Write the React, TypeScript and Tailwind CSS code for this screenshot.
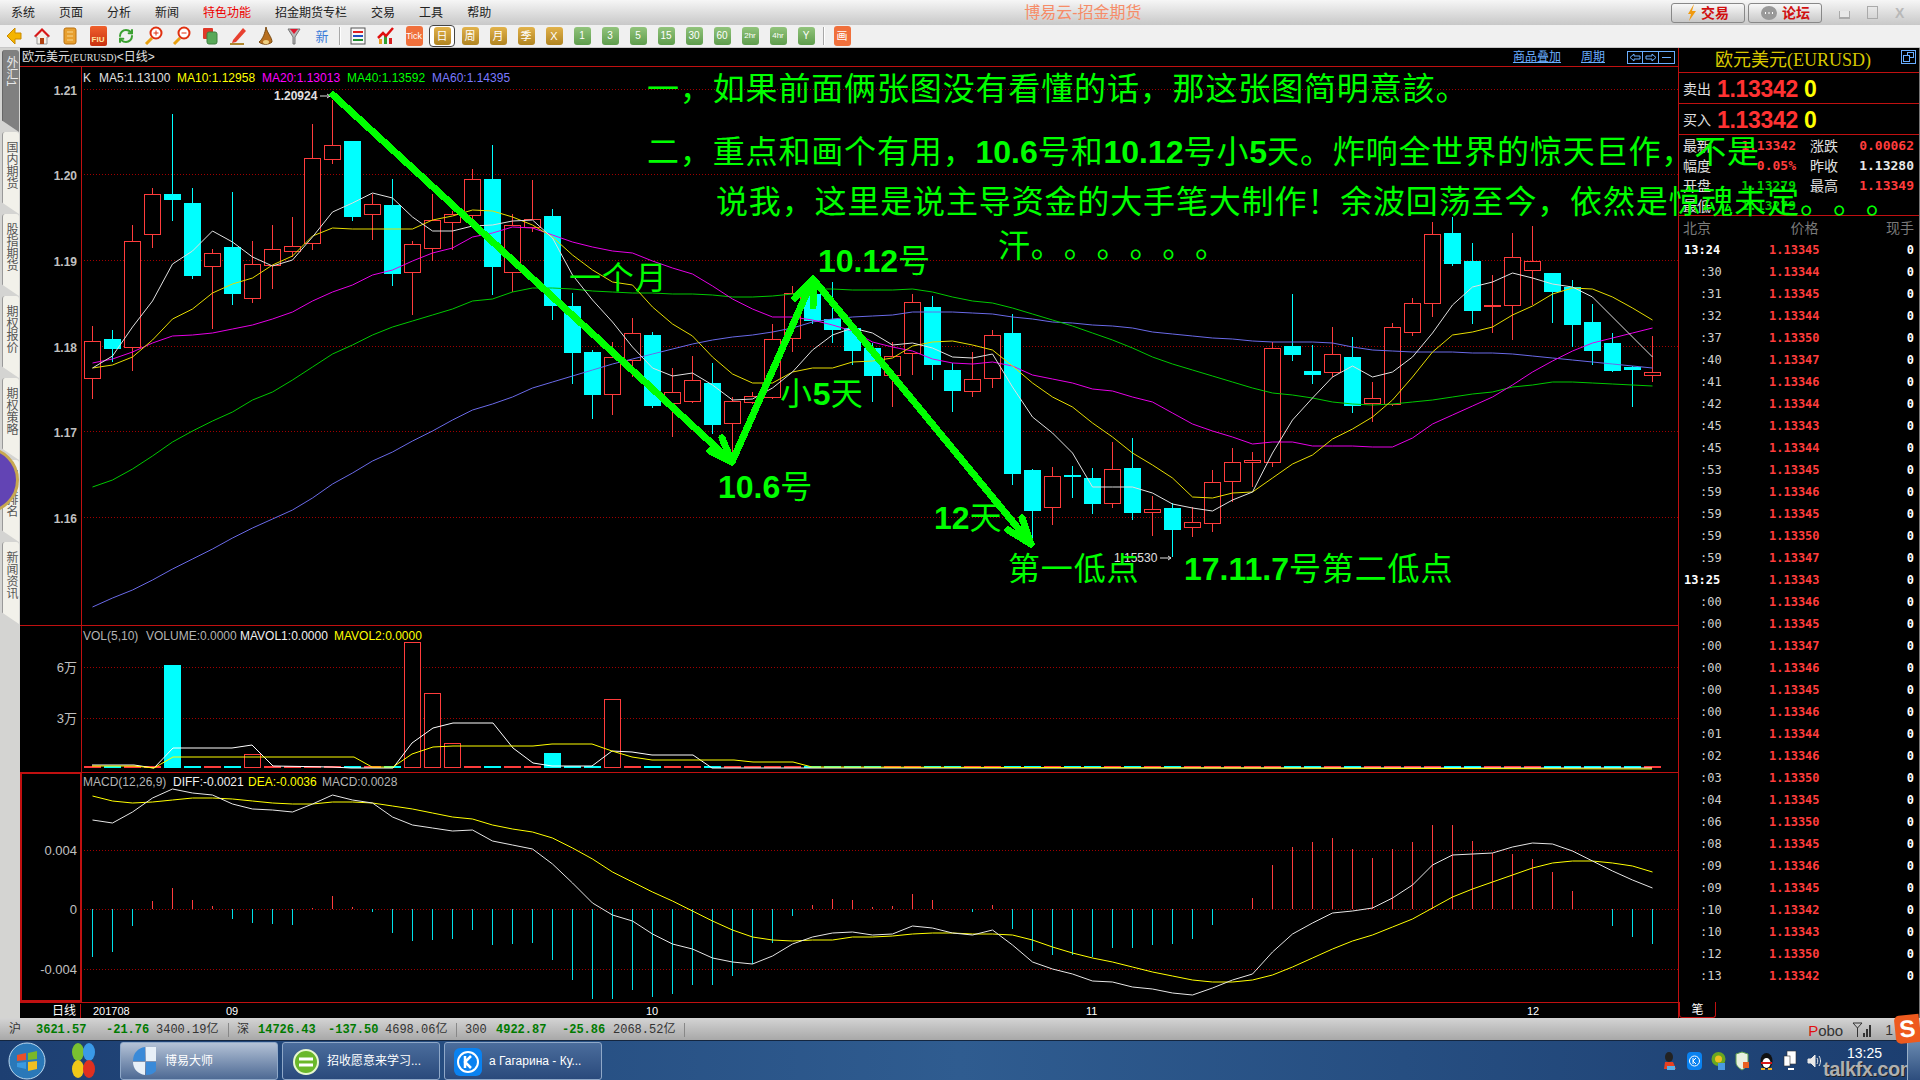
import { RefreshCw } from "lucide-react";

type Candle = [number, number, number, number, number];

// 0 = up (red outline), 1 = down (solid cyan): high, body top, body bottom, low
const candles: Candle[] = [
  [0, 326, 341, 378, 399], [1, 330, 339, 348, 362], [0, 225, 241, 347, 371], [0, 188, 194, 234, 248],
  [1, 114, 194, 199, 221], [1, 188, 203, 275, 279], [0, 249, 253, 266, 329], [1, 192, 247, 293, 305],
  [0, 241, 264, 298, 303], [0, 225, 249, 265, 289], [0, 217, 246, 251, 257], [0, 124, 158, 243, 250],
  [0, 100, 145, 159, 164], [1, 141, 141, 216, 221], [0, 194, 204, 214, 240], [1, 179, 205, 273, 286],
  [0, 241, 244, 272, 315], [0, 194, 220, 248, 261], [0, 211, 214, 222, 250], [0, 169, 179, 215, 220],
  [1, 145, 179, 266, 295], [0, 214, 225, 272, 292], [0, 180, 219, 227, 232], [1, 209, 216, 305, 320],
  [1, 293, 306, 352, 384], [1, 350, 352, 394, 419], [0, 342, 357, 394, 415], [0, 318, 333, 360, 377],
  [1, 332, 335, 405, 408], [0, 368, 392, 403, 437], [0, 356, 380, 401, 403], [1, 363, 383, 424, 434],
  [0, 397, 401, 423, 453], [0, 392, 396, 402, 404], [0, 324, 339, 397, 399], [0, 286, 293, 338, 352],
  [1, 277, 294, 320, 324], [1, 282, 319, 329, 343], [1, 326, 328, 350, 365], [1, 343, 348, 375, 402],
  [0, 342, 356, 375, 407], [0, 294, 302, 353, 375], [1, 296, 307, 364, 380], [1, 363, 370, 390, 412],
  [0, 352, 379, 391, 397], [0, 330, 335, 378, 388], [1, 314, 333, 473, 485], [1, 469, 470, 510, 543],
  [0, 467, 476, 507, 525], [1, 466, 475, 476, 498], [1, 468, 478, 503, 514], [0, 442, 469, 503, 508],
  [1, 438, 468, 512, 520], [0, 496, 509, 512, 536], [1, 503, 508, 529, 557], [0, 507, 522, 527, 537],
  [0, 470, 482, 523, 532], [0, 448, 462, 481, 502], [0, 452, 460, 462, 487], [0, 342, 348, 462, 467],
  [1, 294, 346, 354, 361], [1, 345, 371, 374, 384], [0, 327, 354, 372, 377], [1, 337, 357, 405, 413],
  [0, 382, 398, 403, 422], [0, 323, 327, 404, 406], [0, 298, 303, 332, 336], [0, 222, 234, 303, 317],
  [1, 217, 233, 263, 266], [1, 243, 261, 310, 324], [0, 275, 305, 306, 333], [0, 233, 257, 305, 340],
  [0, 226, 261, 270, 305], [1, 273, 273, 291, 323], [1, 280, 287, 324, 347], [1, 304, 322, 350, 365],
  [1, 333, 343, 370, 372], [1, 366, 367, 369, 407], [0, 336, 372, 375, 382],
];

const ma5 = [368, 356, 327, 301, 264, 251, 231, 242, 257, 266, 260, 237, 212, 203, 193, 198, 217, 231, 231, 226, 225, 221, 220, 238, 275, 300, 322, 347, 368, 376, 373, 385, 400, 399, 388, 372, 350, 335, 328, 333, 345, 343, 348, 357, 358, 354, 387, 417, 433, 453, 487, 487, 487, 493, 504, 508, 511, 500, 492, 453, 420, 398, 377, 366, 377, 372, 357, 333, 305, 287, 282, 273, 278, 284, 287, 297, 317, 337, 357];
const ma10 = [368, 365, 357, 340, 319, 309, 293, 284, 278, 265, 256, 236, 228, 229, 229, 229, 229, 220, 216, 210, 211, 217, 225, 237, 255, 270, 282, 285, 307, 324, 336, 357, 374, 383, 383, 372, 368, 368, 362, 361, 358, 346, 342, 341, 345, 350, 366, 383, 397, 407, 423, 437, 453, 465, 478, 497, 498, 493, 492, 478, 464, 455, 439, 429, 417, 400, 377, 352, 335, 332, 327, 315, 306, 294, 288, 289, 297, 308, 320];
const ma20 = [363, 359, 352, 343, 336, 335, 333, 329, 325, 319, 312, 301, 292, 285, 275, 270, 261, 253, 248, 237, 233, 227, 228, 235, 242, 247, 251, 253, 261, 268, 274, 286, 299, 309, 317, 317, 320, 325, 331, 342, 347, 351, 359, 363, 364, 362, 366, 375, 379, 383, 389, 391, 397, 402, 413, 424, 431, 437, 444, 442, 442, 446, 446, 446, 447, 447, 438, 424, 415, 406, 397, 385, 372, 361, 351, 343, 338, 333, 328];
const ma40 = [487, 480, 469, 456, 442, 431, 421, 412, 400, 392, 380, 367, 354, 345, 335, 327, 321, 315, 309, 301, 299, 292, 288, 288, 289, 291, 292, 293, 293, 294, 294, 295, 297, 297, 296, 294, 289, 289, 290, 290, 290, 289, 292, 297, 301, 303, 308, 314, 320, 326, 333, 340, 348, 357, 364, 370, 376, 382, 388, 393, 395, 398, 402, 404, 405, 404, 402, 400, 397, 394, 392, 387, 385, 382, 382, 383, 384, 385, 386];
const ma60 = [607, 598, 590, 580, 569, 559, 549, 538, 528, 519, 510, 498, 484, 473, 461, 452, 441, 431, 420, 410, 404, 397, 388, 382, 376, 370, 364, 359, 354, 349, 344, 340, 337, 335, 332, 328, 322, 319, 317, 316, 315, 312, 312, 312, 313, 314, 317, 319, 322, 323, 325, 326, 328, 332, 334, 336, 338, 339, 341, 342, 342, 342, 343, 347, 350, 351, 352, 352, 352, 353, 353, 354, 356, 358, 360, 362, 364, 366, 368];

const macdBars = [957, 952, 926, 901, 888, 900, 906, 919, 923, 924, 925, 908, 896, 907, 912, 933, 941, 940, 939, 930, 945, 944, 943, 960, 980, 999, 999, 990, 997, 994, 985, 985, 976, 964, 943, 916, 905, 899, 900, 907, 906, 894, 900, 909, 912, 905, 929, 951, 955, 955, 957, 948, 948, 945, 944, 939, 925, 909, 898, 865, 847, 842, 838, 849, 858, 849, 842, 825, 825, 841, 853, 854, 859, 872, 891, 909, 926, 937, 944];
const diff = [820, 823, 812, 798, 789, 793, 795, 804, 809, 810, 812, 804, 795, 800, 803, 817, 825, 828, 831, 830, 841, 845, 849, 864, 883, 903, 915, 921, 934, 944, 949, 958, 962, 964, 956, 944, 937, 933, 932, 935, 934, 926, 928, 933, 935, 930, 945, 962, 969, 974, 981, 982, 987, 989, 993, 995, 988, 980, 974, 952, 934, 923, 913, 911, 908, 898, 885, 865, 855, 854, 853, 847, 843, 844, 851, 861, 871, 880, 888];
const dea = [796, 801, 803, 802, 800, 798, 798, 799, 801, 803, 804, 804, 802, 802, 803, 806, 809, 813, 817, 819, 825, 829, 832, 838, 848, 859, 872, 882, 892, 901, 911, 921, 930, 937, 940, 941, 940, 940, 937, 937, 936, 934, 933, 933, 934, 934, 935, 940, 947, 953, 958, 962, 967, 972, 976, 980, 982, 982, 980, 975, 967, 958, 949, 941, 935, 927, 919, 908, 897, 889, 882, 875, 868, 863, 861, 861, 863, 866, 872];

const volBars: Record<number, number> = { 4: 665, 8: 754, 16: 642, 17: 693, 18: 743, 23: 753, 26: 699 };
const volWhite = "92,765 134,765 154,768 173,748 232,748 252,745 273,766 332,767 351,768 393,768 412,743 433,728 453,723 493,723 513,748 533,763 552,766 592,766 612,751 632,752 652,755 693,755 712,768 1652,768";
const volYellow = "92,766 134,766 154,768 173,757 354,757 372,767 393,767 412,754 433,747 453,746 533,746 552,744 592,744 612,751 632,757 652,760 734,760 753,762 793,762 812,767 1652,769";

const ticks: [string, string][] = [
  ["13:24", "1.13345"], [":30", "1.13344"], [":31", "1.13345"], [":32", "1.13344"], [":37", "1.13350"],
  [":40", "1.13347"], [":41", "1.13346"], [":42", "1.13344"], [":45", "1.13343"], [":45", "1.13344"],
  [":53", "1.13345"], [":59", "1.13346"], [":59", "1.13345"], [":59", "1.13350"], [":59", "1.13347"],
  ["13:25", "1.13343"], [":00", "1.13346"], [":00", "1.13345"], [":00", "1.13347"], [":00", "1.13346"],
  [":00", "1.13345"], [":00", "1.13346"], [":01", "1.13344"], [":02", "1.13346"], [":03", "1.13350"],
  [":04", "1.13345"], [":06", "1.13350"], [":08", "1.13345"], [":09", "1.13346"], [":09", "1.13345"],
  [":10", "1.13342"], [":10", "1.13343"], [":12", "1.13350"], [":13", "1.13342"],
];

const line = (ys: number[]) => ys.map((y, i) => `${92.5 + 20 * i},${y}`).join(" ");

function Grid({ ys }: { ys: number[] }) {
  return (
    <g stroke="#a00000" strokeDasharray="1 2" shapeRendering="crispEdges">
      {ys.map((y) => (
        <line key={y} x1={81} x2={1678} y1={y} y2={y} />
      ))}
    </g>
  );
}

function AxisLabel({ y, children, bold }: { y: number; children: string; bold?: boolean }) {
  return (
    <text x={77} y={y + 5} textAnchor="end" fill="#c0c0c0" className={bold ? "text-[12px] font-bold" : "text-[13px]"}>
      {children}
    </text>
  );
}

function PriceChart() {
  const prices: [number, string][] = [[89.5, "1.21"], [174.5, "1.20"], [260.5, "1.19"], [346.5, "1.18"], [431.5, "1.17"], [517.5, "1.16"]];
  return (
    <svg width={1658} height={558} viewBox="20 67 1658 558" className="block">
      <Grid ys={prices.map((p) => p[0])} />
      <line x1={81.5} x2={81.5} y1={67} y2={625} stroke="#c01010" />
      {prices.map(([y, t]) => (
        <AxisLabel key={t} y={y} bold>{t}</AxisLabel>
      ))}
      <g shapeRendering="crispEdges">
        {candles.map(([kind, hi, top, bot, lo], i) => {
          const x = 92 + 20 * i;
          const color = kind ? "#00ffff" : "#ff3c3c";
          return (
            <g key={i} stroke={color}>
              <line x1={x + 0.5} x2={x + 0.5} y1={hi} y2={top} />
              <line x1={x + 0.5} x2={x + 0.5} y1={bot} y2={lo} />
              <rect x={x - 8 + 0.5} y={top + 0.5} width={16} height={bot - top} fill={kind ? color : "#000"} />
            </g>
          );
        })}
      </g>
      <g fill="none">
        <polyline points={line(ma60)} stroke="#6a6ae8" />
        <polyline points={line(ma40)} stroke="#00c800" />
        <polyline points={line(ma20)} stroke="#e600e6" />
        <polyline points={line(ma10)} stroke="#e6dc00" />
        <polyline points={line(ma5)} stroke="#e0e0e0" />
      </g>
      <text x={83} y={82} fill="#e0e0e0" className="text-[12px]">
        K
        <tspan x={99}>MA5:1.13100</tspan>
        <tspan x={177} fill="#ffff00">MA10:1.12958</tspan>
        <tspan x={262} fill="#ff00ff">MA20:1.13013</tspan>
        <tspan x={347} fill="#00ff00">MA40:1.13592</tspan>
        <tspan x={432} fill="#7a7aff">MA60:1.14395</tspan>
      </text>
      <text x={274} y={100} fill="#e0e0e0" className="text-[12px] font-bold">1.20924</text>
      <path d="M320 96h10m-3-2l3 2-3 2" stroke="#e0e0e0" fill="none" />
      <text x={1114} y={562} fill="#e0e0e0" className="text-[12px]">1.15530</text>
      <path d="M1160 558h11m-3-2l3 2-3 2" stroke="#e0e0e0" fill="none" />
      {/* hand drawn arrows from the author */}
      <g fill="none" stroke="#00ff00" strokeWidth={7} strokeLinecap="round" strokeLinejoin="round" shapeRendering="crispEdges">
        <path d="M333 95L732 462" />
        <path d="M710 451L732 462L722 438" />
        <path d="M732 462L813 279" />
        <path d="M795 298L813 279L813 306" />
        <path d="M813 279L1031 544" />
        <path d="M1008 530L1031 544L1022 518" />
      </g>
    </svg>
  );
}

function VolumeChart() {
  return (
    <svg width={1658} height={147} viewBox="20 625 1658 147" className="block">
      <Grid ys={[667.5, 718.5]} />
      <line x1={20} x2={1678} y1={625.5} y2={625.5} stroke="#c01010" />
      <line x1={81.5} x2={81.5} y1={625} y2={772} stroke="#c01010" />
      <AxisLabel y={667}>6万</AxisLabel>
      <AxisLabel y={718}>3万</AxisLabel>
      <g shapeRendering="crispEdges">
        {candles.map(([kind], i) => {
          const x = 92 + 20 * i;
          const color = kind ? "#00ffff" : "#ff3c3c";
          const top = volBars[i] ?? 766;
          return (
            <rect key={i} x={x - 8 + 0.5} y={top + 0.5} width={16} height={767 - top} stroke={color} fill={kind ? color : "#000"} />
          );
        })}
      </g>
      <polyline points={volWhite} stroke="#ffffff" fill="none" />
      <polyline points={volYellow} stroke="#ffff00" fill="none" />
      <text x={83} y={640} className="text-[12px]" fill="#b4b4b4">
        VOL(5,10)
        <tspan x={146} fill="#b4b4b4">VOLUME:0.0000</tspan>
        <tspan x={240} fill="#f0f0f0">MAVOL1:0.0000</tspan>
        <tspan x={334} fill="#ffff00">MAVOL2:0.0000</tspan>
      </text>
    </svg>
  );
}

function MacdChart() {
  return (
    <svg width={1658} height={230} viewBox="20 772 1658 230" className="block">
      <Grid ys={[850.5, 909.5, 969.5]} />
      <line x1={20} x2={1678} y1={772.5} y2={772.5} stroke="#c01010" />
      <rect x={21} y={773} width={60} height={228} stroke="#c01010" strokeWidth={2} fill="none" />
      <AxisLabel y={850}>0.004</AxisLabel>
      <AxisLabel y={909}>0</AxisLabel>
      <AxisLabel y={969}>-0.004</AxisLabel>
      <g shapeRendering="crispEdges">
        {macdBars.map((y, i) => (
          <line key={i} x1={92.5 + 20 * i} x2={92.5 + 20 * i} y1={909} y2={y} stroke={y > 909 ? "#00e0e8" : "#ff3c3c"} />
        ))}
      </g>
      <polyline points={line(dea)} stroke="#ffff00" fill="none" />
      <polyline points={line(diff)} stroke="#e6e6e6" fill="none" />
      <text x={83} y={786} className="text-[12px]" fill="#b4b4b4">
        MACD(12,26,9)
        <tspan x={173} fill="#f0f0f0">DIFF:-0.0021</tspan>
        <tspan x={248} fill="#ffff00">DEA:-0.0036</tspan>
        <tspan x={322} fill="#b4b4b4">MACD:0.0028</tspan>
      </text>
    </svg>
  );
}

const goldBtns = ["周", "月", "季", "X"];
const greenBtns = ["1", "3", "5", "15", "30", "60", "2hr", "4hr", "Y"];

function Tool({ children }: { children: React.ReactNode }) {
  return <div className="flex h-[22px] w-[28px] shrink-0 items-center justify-center">{children}</div>;
}

function GoldBtn({ label }: { label: string }) {
  return (
    <span className="flex h-[18px] w-[17px] items-center justify-center rounded-[3px] bg-linear-to-b from-[#e2b24a] to-[#b08420] text-[11px] leading-none text-white">
      {label}
    </span>
  );
}

function Toolbar() {
  return (
    <div className="flex h-[23px] items-start border-b border-[#c8c8c8] bg-[#f0f0f0]">
      <Tool>
        <svg width="18" height="20" viewBox="0 0 18 20"><path d="M10 2L2 10l8 8v-5h6V7h-6z" fill="#f4b400" stroke="#c98a00" /></svg>
      </Tool>
      <Tool>
        <svg width="20" height="20" viewBox="0 0 20 20"><path d="M3 10l7-7 7 7v1h-2v7H5v-7H3z" fill="#f4f0e8" stroke="#999" /><path d="M2 10l8-8 8 8-2 1-6-6-6 6z" fill="#d81818" /><rect x="8" y="12" width="4" height="6" fill="#b04010" /></svg>
      </Tool>
      <Tool>
        <svg width="18" height="20" viewBox="0 0 18 20"><rect x="3" y="2" width="12" height="16" rx="2" fill="#e8a030" stroke="#b87010" /><path d="M6 6h6M6 10h6M6 14h6" stroke="#f8d890" /></svg>
      </Tool>
      <Tool>
        <div className="flex h-[20px] w-[17px] items-end justify-center rounded-[2px] bg-linear-to-b from-[#f0602c] to-[#c83010] pb-[2px] font-bold text-[8px] leading-none text-[#ffe8a0]">FIU</div>
      </Tool>
      <Tool><RefreshCw size={16} color="#3aa030" strokeWidth={3} /></Tool>
      <Tool>
        <svg width="20" height="20" viewBox="0 0 20 20"><path d="M8 12l-6 6" stroke="#e8a010" strokeWidth="3" /><circle cx="12" cy="7" r="5.5" fill="#fff" stroke="#e03010" strokeWidth="2" /><path d="M9.5 7h5M12 4.5v5" stroke="#e03010" /></svg>
      </Tool>
      <Tool>
        <svg width="20" height="20" viewBox="0 0 20 20"><path d="M8 12l-6 6" stroke="#e8a010" strokeWidth="3" /><circle cx="12" cy="7" r="5.5" fill="#fff" stroke="#e03010" strokeWidth="2" /><path d="M9.5 7h5" stroke="#e03010" /></svg>
      </Tool>
      <Tool>
        <svg width="20" height="20" viewBox="0 0 20 20"><rect x="3" y="2" width="10" height="11" rx="1" fill="#e03828" /><rect x="7" y="6" width="10" height="12" rx="2" fill="#58a858" stroke="#3f8040" /></svg>
      </Tool>
      <Tool>
        <svg width="20" height="20" viewBox="0 0 20 20"><path d="M5 14L15 2l3 3L8 16l-4 1z" fill="#e84030" /><path d="M2 18h14" stroke="#b08830" strokeWidth="2" /></svg>
      </Tool>
      <Tool>
        <svg width="18" height="20" viewBox="0 0 18 20"><path d="M9 1c1 6 6 10 6 15-3 3-10 3-13 0 4-3 6-9 7-15z" fill="#b87020" stroke="#7a4a10" /><ellipse cx="9" cy="16" rx="3" ry="2" fill="#f0d080" /></svg>
      </Tool>
      <Tool>
        <svg width="18" height="20" viewBox="0 0 18 20"><path d="M3 3h12L10 11v7H8v-7z" fill="#b8b8b8" stroke="#777" /><path d="M5 3h8l-4 5z" fill="#e01830" /></svg>
      </Tool>
      <Tool><span className="text-[13px] leading-none text-[#3a7ad8]">新</span></Tool>
      <div className="mx-[3px] mt-[2px] h-[18px] w-[2px] border-x border-x-[#a8a8a8] border-r-white" />
      <Tool>
        <svg width="18" height="20" viewBox="0 0 18 20"><rect x="2" y="2" width="14" height="16" fill="#f8f8f8" stroke="#555" /><path d="M4 6h10" stroke="#e02020" strokeWidth="2" /><path d="M4 10h10" stroke="#2050c0" strokeWidth="2" /><path d="M4 14h10" stroke="#209030" strokeWidth="2" /></svg>
      </Tool>
      <Tool>
        <svg width="20" height="20" viewBox="0 0 20 20"><rect x="3" y="13" width="3" height="5" fill="#e8a020" /><rect x="8" y="10" width="3" height="8" fill="#30a030" /><rect x="13" y="12" width="3" height="6" fill="#d82020" /><path d="M2 12l5-5 3 3 7-8" fill="none" stroke="#e01010" strokeWidth="2.5" /></svg>
      </Tool>
      <Tool>
        <span className="flex h-[20px] w-[17px] items-center justify-center rounded-[3px] bg-[#f0703c] text-[9px] leading-none text-white">Tick</span>
      </Tool>
      <Tool>
        <span className="flex h-[22px] w-[26px] items-center justify-center rounded-[4px] border border-[#444] bg-white">
          <GoldBtn label="日" />
        </span>
      </Tool>
      {goldBtns.map((b) => (
        <Tool key={b}><GoldBtn label={b} /></Tool>
      ))}
      {greenBtns.map((b) => (
        <Tool key={b}>
          <span className={`flex h-[18px] w-[17px] items-center justify-center rounded-[3px] bg-linear-to-b from-[#92c47c] to-[#5e9c4c] leading-none text-white ${b.length > 2 ? "text-[8px]" : "text-[10px]"}`}>
            {b}
          </span>
        </Tool>
      ))}
      <div className="mx-[3px] mt-[2px] h-[18px] w-[2px] border-x border-x-[#a8a8a8] border-r-white" />
      <Tool>
        <span className="flex h-[20px] w-[17px] items-center justify-center rounded-[3px] bg-[#f0703c] text-[11px] leading-none text-white">画</span>
      </Tool>
    </div>
  );
}

function SideTab({ label, active }: { label: string; active?: boolean }) {
  return (
    <div className={`flex h-[82px] w-[17px] shrink-0 items-center rounded-t-[3px] border-l text-[12px] leading-[12px] [clip-path:polygon(0_0,100%_0,100%_100%,0_86%)] [writing-mode:vertical-rl] ${active ? "border-[#666] bg-[#808080] pt-[6px] text-[#e8e8e8]" : "border-[#999] bg-[#f2f1ea] pt-[9px] text-[#555]"}`}>
      {label}
    </div>
  );
}

function RedNum({ children, color = "text-[#ff3c3c]" }: { children: string; color?: string }) {
  return <span className={`font-['DejaVu_Sans_Mono',monospace] text-[13px] font-bold ${color}`}>{children}</span>;
}

function ArrowBox({ flip }: { flip?: boolean }) {
  return (
    <span className="flex h-[13px] w-[16px] items-center justify-center border border-[#6aaeff] not-first:border-l-0">
      <svg width="12" height="9" viewBox="0 0 12 9" fill="none" stroke="#6aaeff" className={flip ? "-scale-x-100" : ""}>
        <path d="M1 4.500L5 1v2h6v3H5v2z" />
      </svg>
    </span>
  );
}

function QuotePanel() {
  return (
    <div className="flex w-[242px] flex-col border-x border-l-[#c01010] border-r-[#777] bg-black">
      <div className="relative flex h-[25px] items-center justify-center border-b border-[#c01010] pr-[12px] font-['Liberation_Serif','Noto_Sans_CJK_SC',serif] text-[18px] leading-none text-[#d8c800]">
        欧元美元(EURUSD)
        <svg className="absolute right-[3px] top-[2px]" width="15" height="14" viewBox="0 0 15 14" fill="none" stroke="#6aaeff">
          <rect x="0.5" y="0.5" width="14" height="13" />
          <rect x="6.5" y="2.5" width="6" height="5" />
          <rect x="2.5" y="5.5" width="6" height="6" fill="#000" />
        </svg>
      </div>
      {["卖出", "买入"].map((label) => (
        <div key={label} className="flex h-[31px] items-center border-b border-[#c01010] pl-[4px] pt-[2px] text-[14px] text-[#e0e0e0]">
          <span className="w-[34px]">{label}</span>
          <span className="text-[23px] font-bold leading-none tracking-[-0.3px] text-[#ff3232]">1.13342</span>
          <span className="ml-[6px] text-[23px] font-bold leading-none text-[#ffff00]">0</span>
        </div>
      ))}
      <div className="grid h-[81px] grid-cols-[114px_1fr] content-center border-b border-[#c01010] pl-[4px] pr-[5px] pt-[1px] text-[14px] leading-[20px] text-[#e0e0e0]">
        <div className="flex justify-between pr-[1px]"><span>最新</span><RedNum>1.13342</RedNum></div>
        <div className="flex justify-between pl-[13px]"><span>涨跌</span><RedNum>0.00062</RedNum></div>
        <div className="flex justify-between pr-[1px]"><span>幅度</span><RedNum>0.05%</RedNum></div>
        <div className="flex justify-between pl-[13px]"><span>昨收</span><RedNum color="text-[#e8e8e8]">1.13280</RedNum></div>
        <div className="flex justify-between pr-[1px]"><span>开盘</span><RedNum color="text-[#00d000]">1.13279</RedNum></div>
        <div className="flex justify-between pl-[13px]"><span>最高</span><RedNum>1.13349</RedNum></div>
        <div className="flex justify-between pr-[1px]"><span>最低</span><RedNum color="text-[#00d000]">1.13279</RedNum></div>
        <div />
      </div>
      <div className="flex h-[22px] items-center justify-between pl-[4px] pr-[5px] pt-[2px] text-[14px] text-[#7a7a7a]">
        <span>北京</span>
        <span className="ml-[12px]">价格</span>
        <span>现手</span>
      </div>
      <div className="mt-[1px] flex-1 font-['DejaVu_Sans_Mono',monospace] text-[12px] leading-[22px]">
        {ticks.map(([t, price], i) => (
          <div key={i} className="flex h-[22px] items-center pr-[5px]">
            {t.length > 3 ? (
              <span className="w-[90px] pl-[5px] font-bold text-white">{t}</span>
            ) : (
              <span className="w-[90px] pl-[21px] text-[#d0d0d0]">{t}</span>
            )}
            <span className="font-bold text-[#ff3c3c]">{price}</span>
            <span className="ml-auto font-bold text-white">0</span>
          </div>
        ))}
      </div>
      <div className="relative h-[16px]">
        <span className="absolute left-0 top-0 flex h-[16px] w-[37px] items-center justify-center rounded-b-[3px] border-x border-b border-[#c01010] text-[12px] leading-none text-white">笔</span>
      </div>
    </div>
  );
}

function GreenNote({ className, children }: { className: string; children: React.ReactNode }) {
  return (
    <div className={`absolute whitespace-nowrap text-[32px] leading-[32px] tracking-[0.85px] text-[#00ff00] [text-spacing-trim:space-all] ${className}`}>
      {children}
    </div>
  );
}

function B({ children }: { children: string }) {
  return <span className="font-bold tracking-normal">{children}</span>;
}

function StatusBar() {
  const groups = [
    { name: "沪", w: ["w-[27px]", "w-[70px]", "w-[50px]", "w-[72px]"], price: "3621.57", chg: "-21.76", amt: "3400.19亿" },
    { name: "深", w: ["w-[21px]", "w-[70px]", "w-[57px]", "w-[71px]"], price: "14726.43", chg: "-137.50", amt: "4698.06亿" },
    { name: "300", w: ["w-[31px]", "w-[66px]", "w-[51px]", "w-[71px]"], price: "4922.87", chg: "-25.86", amt: "2068.52亿" },
  ];
  return (
    <div className="flex h-[22px] items-center bg-linear-to-b from-[#d4d4d4] to-[#a8a8a8] pl-[9px] pt-[2px] font-['Liberation_Mono','Noto_Sans_CJK_SC',monospace] text-[12px] leading-none text-[#333]">
      {groups.map((g) => (
        <div key={g.name} className="flex items-center">
          <span className={g.w[0]}>{g.name}</span>
          <span className={`${g.w[1]} font-bold text-[#007a00]`}>{g.price}</span>
          <span className={`${g.w[2]} font-bold text-[#007a00]`}>{g.chg}</span>
          <span className={g.w[3]}>{g.amt}</span>
          <span className="mr-[8px] h-[14px] border-l border-[#888]" />
        </div>
      ))}
      <div className="ml-auto flex items-center pr-[27px]">
        <span className="font-['Liberation_Sans'] text-[15px] text-[#333]"><span className="text-[#e01010]">P</span>obo</span>
        <svg className="ml-[9px]" width="22" height="16" viewBox="0 0 22 16" fill="none" stroke="#333">
          <path d="M1 1h9L5.500 6zM5.500 6v9" />
          <path d="M12 15v-4M15 15V7M18 15V3" strokeWidth="2" />
        </svg>
        <span className="ml-[11px] font-['Liberation_Sans'] text-[14px]">1</span>
      </div>
    </div>
  );
}

function TaskButton({ label, active, icon }: { label: string; active?: boolean; icon: React.ReactNode }) {
  return (
    <div className={`flex h-[38px] w-[158px] items-center gap-[6px] rounded-[3px] border border-[#8fa8c8] pl-[8px] text-[12px] text-white ${active ? "bg-linear-to-b from-[#b4c2d6] to-[#4e6a94]" : "bg-linear-to-b from-[#4b6d9c] to-[#2a4a7c]"}`}>
      {icon}
      <span>{label}</span>
    </div>
  );
}

function Taskbar() {
  return (
    <div className="relative flex h-[40px] items-center border-t border-[#14263f] bg-linear-to-r from-[#1d3f72] via-[#2f5c90] to-[#1c3e70]">
      <svg className="ml-[7px] shrink-0" width="40" height="40" viewBox="0 0 40 40">
        <circle cx="20" cy="20" r="18" fill="#2a78b8" stroke="#bcd8ee" />
        <path d="M10 14l9-2v7l-9 1z" fill="#e8502a" />
        <path d="M21 12l9-2v8l-9 1z" fill="#7ab82a" />
        <path d="M10 22l9-1v7l-9-2z" fill="#3a9ae0" />
        <path d="M21 21l9-1v8l-9 2z" fill="#f0c020" />
      </svg>
      <svg className="ml-[20px] shrink-0" width="32" height="40" viewBox="0 0 32 40">
        <ellipse cx="11" cy="11" rx="6" ry="9" fill="#7ac030" />
        <ellipse cx="22" cy="11" rx="6" ry="9" fill="#3a9ae8" />
        <ellipse cx="11" cy="28" rx="6" ry="9" fill="#f0c818" />
        <ellipse cx="22" cy="28" rx="6" ry="9" fill="#e03020" />
      </svg>
      <div className="ml-[21px] flex gap-[4px]">
        <TaskButton
          active
          label="博易大师"
          icon={
            <svg width="30" height="32" viewBox="0 0 30 32"><path d="M4 16C4 8 9 3 16 2v14z" fill="#3a8ad8" /><path d="M17 2h10v14H17z" fill="#e8f0f8" /><path d="M4 17h12v13C9 29 4 24 4 17z" fill="#e8f0f8" /><path d="M17 17h10v9c-3 3-6 4-10 4z" fill="#3a8ad8" /></svg>
          }
        />
        <TaskButton
          label="招收愿意来学习..."
          icon={
            <svg width="30" height="32" viewBox="0 0 30 32"><circle cx="15" cy="17" r="12" fill="#6ab82a" stroke="#e8f8d0" strokeWidth="2" /><path d="M8 14h14M8 20h14" stroke="#fff" strokeWidth="3" /></svg>
          }
        />
        <TaskButton
          label="а Гагарина - Ку..."
          icon={
            <svg width="30" height="32" viewBox="0 0 30 32"><rect x="1" y="3" width="28" height="28" rx="6" fill="#0a82f0" /><circle cx="15" cy="17" r="10" fill="none" stroke="#fff" strokeWidth="2" /><path d="M12 11v12M18 11l-6 6 6 6" fill="none" stroke="#fff" strokeWidth="2.500" /></svg>
          }
        />
      </div>
      {/* tray */}
      <div className="ml-auto flex items-center gap-[9px] pr-[98px]">
        <svg width="15" height="20" viewBox="0 0 15 20"><ellipse cx="6" cy="6" rx="4" ry="5" fill="#222" /><path d="M2 11h8l3 7H1z" fill="#e84020" /><path d="M4 15h8v4H4z" fill="#5ab0e8" /></svg>
        <svg width="15" height="20" viewBox="0 0 15 20"><rect x="0" y="1" width="15" height="18" rx="4" fill="#0a82f0" /><circle cx="7.500" cy="10" r="5" fill="none" stroke="#fff" /><path d="M6 7v6M9 7L6 10l3 3" fill="none" stroke="#fff" /></svg>
        <svg width="15" height="20" viewBox="0 0 15 20"><circle cx="7.500" cy="8" r="7" fill="#6aa820" /><circle cx="7.500" cy="8" r="3.500" fill="#f0c020" /><rect x="7" y="12" width="7" height="7" fill="#4a9ae0" /></svg>
        <svg width="15" height="20" viewBox="0 0 15 20"><path d="M1 3l6-2 6 2v8c0 4-3 6-6 8-3-2-6-4-6-8z" fill="#e8f0e0" stroke="#60a050" /><rect x="8" y="11" width="6" height="6" fill="#e86020" /></svg>
        <svg width="15" height="20" viewBox="0 0 15 20"><ellipse cx="7.500" cy="10" rx="6" ry="8" fill="#111" /><ellipse cx="7.500" cy="12" rx="4" ry="5" fill="#fff" /><path d="M2 11h11v2H2z" fill="#d81818" /><path d="M2 18h4M9 18h4" stroke="#f0b020" strokeWidth="2" /></svg>
        <svg width="15" height="22" viewBox="0 0 15 22" fill="#fff" stroke="#333" strokeWidth="0.6"><rect x="4" y="1" width="9" height="13" /><rect x="1" y="6" width="6" height="10" /><path d="M5 19h6" stroke="#fff" strokeWidth="2" /></svg>
        <svg width="15" height="20" viewBox="0 0 15 20" fill="none" stroke="#e8e8e8"><path d="M1 8h3l4-4v12l-4-4H1z" fill="#e8e8e8" /><path d="M10 7c1 2 1 4 0 6M12 5c2 3 2 7 0 10" /></svg>
      </div>
      <span className="absolute right-[38px] top-[5px] text-[14px] leading-none text-white">13:25</span>
      <span className="absolute bottom-[1px] right-[3px] text-[20px] font-bold leading-none tracking-[-0.5px] text-[#b0b0b0] [text-shadow:1px_1px_0_#222]">talkfx.com</span>
      <div className="absolute right-0 top-0 h-[40px] w-[13px] border-l border-[#9ab0c8] bg-linear-to-b from-[#6a8ab0] to-[#2c4c7c]" />
    </div>
  );
}

export default function App() {
  return (
    <div className="relative flex h-[1080px] w-[1920px] flex-col overflow-hidden bg-[#f0f0f0] font-['Liberation_Sans','Noto_Sans_CJK_SC',sans-serif]">
      {/* menu */}
      <div className="flex h-[25px] items-center bg-linear-to-b from-[#f6f6f6] to-[#c8c8c8] pl-[11px] text-[12px] leading-none text-[#222]">
        <div className="flex gap-[24px]">
          <span>系统</span>
          <span>页面</span>
          <span>分析</span>
          <span>新闻</span>
          <span className="text-[#ee0000]">特色功能</span>
          <span>招金期货专栏</span>
          <span>交易</span>
          <span>工具</span>
          <span>帮助</span>
        </div>
        <span className="ml-[533px] text-[16px] text-[#f68c68]">博易云-招金期货</span>
        <div className="ml-auto flex items-center">
          <div className="flex h-[20px] w-[74px] items-center justify-center gap-[4px] rounded-[3px] border border-[#888] bg-linear-to-b from-[#f8f8f8] to-[#c8c8c8] text-[14px] font-bold text-[#d01010]">
            <svg width="10" height="17" viewBox="0 0 10 17"><path d="M7 0L1 10h3l-2 7 7-10H5z" fill="#f09a10" /></svg>
            交易
          </div>
          <div className="ml-[3px] flex h-[20px] w-[74px] items-center justify-center gap-[4px] rounded-[3px] border border-[#888] bg-linear-to-b from-[#f8f8f8] to-[#c8c8c8] text-[14px] font-bold text-[#d01010]">
            <svg width="18" height="16" viewBox="0 0 18 16"><ellipse cx="9" cy="8" rx="8" ry="7" fill="#999" /><path d="M5 8h1m2.500 0h1m2.500 0h1" stroke="#fff" strokeWidth="2" /></svg>
            论坛
          </div>
          <div className="ml-[14px] flex w-[84px] items-start gap-[17px] pl-[3px]">
            <span className="mt-[5px] h-[8px] w-[11px] border-b-2 border-x border-[#aaa] bg-[#e8e8e8]" />
            <span className="h-[13px] w-[11px] border border-[#aaa]" />
            <span className="text-[14px] font-bold leading-[14px] text-[#b8b8b8]">X</span>
          </div>
        </div>
      </div>
      <Toolbar />

      <div className="flex h-[970px]">
        {/* side tabs */}
        <div className="flex w-[20px] flex-col items-start bg-[#d4d4d2] pl-[2px] pt-[2px]">
          <SideTab active label="外汇1" />
          <SideTab label="国内期货" />
          <SideTab label="股指期货" />
          <SideTab label="期权报价" />
          <SideTab label="期权策略" />
          <SideTab label="期货排名" />
          <SideTab label="新闻资讯" />
        </div>

        <div className="flex w-[1658px] flex-col bg-black">
          <div className="flex h-[19px] items-center border-b border-[#c01010] pl-[2px] text-[12px] leading-none text-[#e0e0e0]">
            <span>欧元美元<span className="font-['Liberation_Serif'] text-[10px]">(EURUSD)</span>&lt;日线&gt;</span>
            <div className="ml-auto flex items-center pr-[3px] text-[#6aaeff]">
              <span className="underline">商品叠加</span>
              <span className="ml-[20px] underline">周期</span>
              <div className="ml-[22px] flex">
                <ArrowBox />
                <ArrowBox flip />
                <span className="flex h-[13px] w-[16px] flex-col justify-center border-y border-r border-[#6aaeff] px-[3px]"><span className="border-t border-[#6aaeff]" /></span>
              </div>
            </div>
          </div>
          <PriceChart />
          <VolumeChart />
          <MacdChart />
          <div className="flex h-[16px] border-t border-[#c01010] pt-[1px] text-[12px] leading-[15px] text-white">
            <span className="w-[61px] border-r border-[#c01010] pr-[4px] text-right">日线</span>
            <span className="relative flex-1">
              <span className="absolute left-[12px] text-[11px]">201708</span>
              <span className="absolute left-[145px] text-[11px]">09</span>
              <span className="absolute left-[565px] text-[11px]">10</span>
              <span className="absolute left-[1005px] text-[11px]">11</span>
              <span className="absolute left-[1446px] text-[11px]">12</span>
            </span>
          </div>
        </div>

        <QuotePanel />
      </div>
      <StatusBar />
      <Taskbar />

      {/* purple ball on the side tabs */}
      <div className="absolute left-[-47px] top-[447px] h-[66px] w-[66px] rounded-full border-[3px] border-[#c8a850] bg-[#6244b4]" />
      {/* orange ime logo */}
      <div className="absolute right-0 top-[1015px] flex h-[28px] w-[25px] -rotate-6 items-center justify-center rounded-l-[5px] bg-[#ee5a1e] text-[24px] font-bold leading-none text-white">S</div>

      {/* author's notes painted over the chart */}
      <GreenNote className="left-[647px] top-[73px]">一，如果前面俩张图没有看懂的话，那这张图简明意該。</GreenNote>
      <GreenNote className="left-[647px] top-[136px]">
        二，重点和画个有用，<B>10.6</B>号和<B>10.12</B>号小<B>5</B>天。炸响全世界的惊天巨作，不是
      </GreenNote>
      <GreenNote className="left-[716px] top-[186px]">说我，这里是说主导资金的大手笔大制作！余波回荡至今，依然是惊魂未定。。。</GreenNote>
      <GreenNote className="left-[998px] top-[230px]">汗。。。。。。</GreenNote>
      <GreenNote className="left-[569px] top-[262px]">一个月</GreenNote>
      <GreenNote className="left-[818px] top-[245px]"><B>10.12</B>号</GreenNote>
      <GreenNote className="left-[780px] top-[378px]">小<B>5</B>天</GreenNote>
      <GreenNote className="left-[718px] top-[471px]"><B>10.6</B>号</GreenNote>
      <GreenNote className="left-[934px] top-[502px]"><B>12</B>天</GreenNote>
      <GreenNote className="left-[1008px] top-[553px]">第一低点</GreenNote>
      <GreenNote className="left-[1184px] top-[553px]"><B>17.11.7</B>号第二低点</GreenNote>
    </div>
  );
}
